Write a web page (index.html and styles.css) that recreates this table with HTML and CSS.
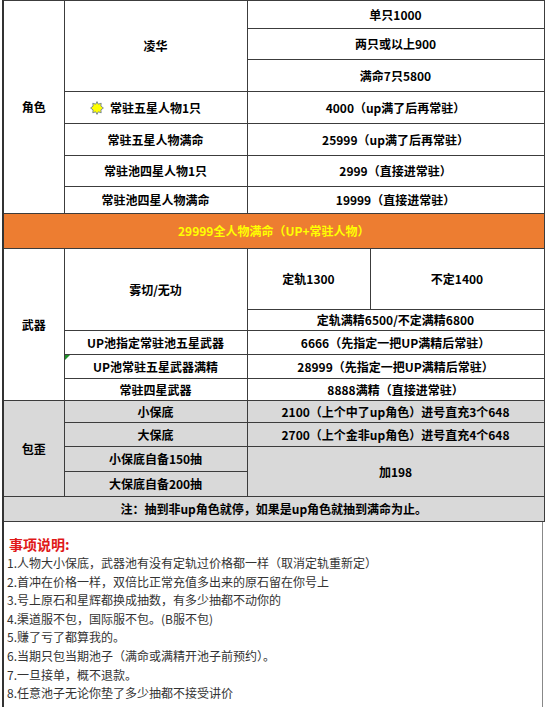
FILE: index.html
```html
<!DOCTYPE html>
<html lang="zh-CN">
<head>
<meta charset="utf-8">
<title>价格表</title>
<link rel="stylesheet" href="styles.css">
</head>
<body>
<div class="sheet">
  <table class="grid">
    <colgroup><col class="c1"><col class="c2"><col class="c3"><col class="c4"></colgroup>
    <tbody>
      <tr class="h28"><td rowspan="7">角色</td><td rowspan="3">凌华</td><td colspan="2">单只1000</td></tr>
      <tr class="h31"><td colspan="2">两只或以上900</td></tr>
      <tr class="h32"><td colspan="2">满命7只5800</td></tr>
      <tr class="h32"><td><span class="iconed"><svg class="star" viewBox="0 0 14 14" aria-hidden="true"><polygon points="7,0.6 8.3,3.2 11.2,2.2 10.9,5.1 13.4,7 10.9,8.9 11.2,11.8 8.3,10.8 7,13.4 5.7,10.8 2.8,11.8 3.1,8.9 0.6,7 3.1,5.1 2.8,2.2 5.7,3.2" fill="#ffff00" stroke="#6f7f95" stroke-width="0.9" stroke-linejoin="round"/></svg>常驻五星人物1只</span></td><td colspan="2">4000（up满了后再常驻）</td></tr>
      <tr class="h32"><td>常驻五星人物满命</td><td colspan="2">25999（up满了后再常驻）</td></tr>
      <tr class="h31"><td>常驻池四星人物1只</td><td colspan="2">2999（直接进常驻）</td></tr>
      <tr class="h27"><td>常驻池四星人物满命</td><td colspan="2">19999（直接进常驻）</td></tr>
      <tr class="h35 band"><td colspan="4">29999全人物满命（UP+常驻人物）</td></tr>
      <tr class="h61"><td rowspan="5">武器</td><td rowspan="2">雾切/无功</td><td>定轨1300</td><td>不定1400</td></tr>
      <tr class="h21"><td colspan="2">定轨满精6500/不定满精6800</td></tr>
      <tr class="h24"><td>UP池指定常驻池五星武器</td><td colspan="2">6666（先指定一把UP满精后常驻）</td></tr>
      <tr class="h24"><td class="flag">UP池常驻五星武器满精</td><td colspan="2">28999（先指定一把UP满精后常驻）</td></tr>
      <tr class="h22"><td>常驻四星武器</td><td colspan="2">8888满精（直接进常驻）</td></tr>
      <tr class="h22 gray"><td rowspan="4">包歪</td><td>小保底</td><td colspan="2">2100（上个中了up角色）进号直充3个648</td></tr>
      <tr class="h24 gray"><td>大保底</td><td colspan="2">2700（上个金非up角色）进号直充4个648</td></tr>
      <tr class="h25 gray"><td>小保底自备150抽</td><td colspan="2" rowspan="2">加198</td></tr>
      <tr class="h25 gray"><td>大保底自备200抽</td></tr>
      <tr class="h25 gray"><td colspan="4">注：抽到非up角色就停，如果是up角色就抽到满命为止。</td></tr>
    </tbody>
  </table>
  <div class="notes">
    <p class="notes-title">事项说明:</p>
    <p>1.人物大小保底，武器池有没有定轨过价格都一样（取消定轨重新定）</p>
    <p>2.首冲在价格一样，双倍比正常充值多出来的原石留在你号上</p>
    <p>3.号上原石和星辉都换成抽数，有多少抽都不动你的</p>
    <p>4.渠道服不包，国际服不包。(B服不包)</p>
    <p>5.赚了亏了都算我的。</p>
    <p>6.当期只包当期池子（满命或满精开池子前预约）。</p>
    <p>7.一旦接单，概不退款。</p>
    <p>8.任意池子无论你垫了多少抽都不接受讲价</p>
  </div>
</div>
</body>
</html>
```
FILE: styles.css
```css
html, body {
  margin: 0;
  padding: 0;
  background: #ffffff;
}

body {
  font-family: "Microsoft YaHei", "Noto Sans CJK SC", "Noto Sans", sans-serif;
  color: #000;
}

.sheet {
  width: 541px;
  margin: 0 0 0 2px;
}

.grid {
  width: 541px;
  table-layout: fixed;
  border-collapse: collapse;
  border: 1px solid #333;
  border-left: 2px solid #333;
  font-size: 12px;
  font-weight: 700;
}

.c1 { width: 61px; }
.c2 { width: 183px; }
.c3 { width: 123px; }
.c4 { width: 174px; }

.grid td {
  border: 1px solid #3c3c3c;
  padding: 0;
  text-align: center;
  vertical-align: middle;
  line-height: 16px;
  white-space: nowrap;
}

.h21 { height: 21px; }
.h22 { height: 22px; }
.h24 { height: 24px; }
.h25 { height: 25px; }
.h27 { height: 27px; }
.h28 { height: 28px; }
.h31 { height: 31px; }
.h32 { height: 32px; }
.h35 { height: 35px; }
.h61 { height: 61px; }

.band td {
  background: #ed7d31;
  color: #ffff00;
}

.gray td {
  background: #d9d9d9;
}

.iconed {
  position: relative;
  display: inline-block;
}

.star {
  position: absolute;
  left: -20px;
  top: 1px;
  width: 14px;
  height: 14px;
}

.flag {
  position: relative;
}

.flag::before {
  content: "";
  position: absolute;
  left: 0;
  top: 0;
  width: 0;
  height: 0;
  border-top: 5px solid #1f8f2a;
  border-right: 5px solid transparent;
}

.notes {
  border-left: 2px solid #333;
  border-right: 1px solid #888;
  padding: 12px 0 30px 3px;
  font-size: 12px;
  color: #333;
}

.notes p {
  margin: 0;
  line-height: 18.6px;
  white-space: nowrap;
}

.notes .notes-title {
  color: #e01818;
  font-weight: 700;
  font-size: 14px;
  line-height: 20px;
  padding-left: 2px;
}
```
